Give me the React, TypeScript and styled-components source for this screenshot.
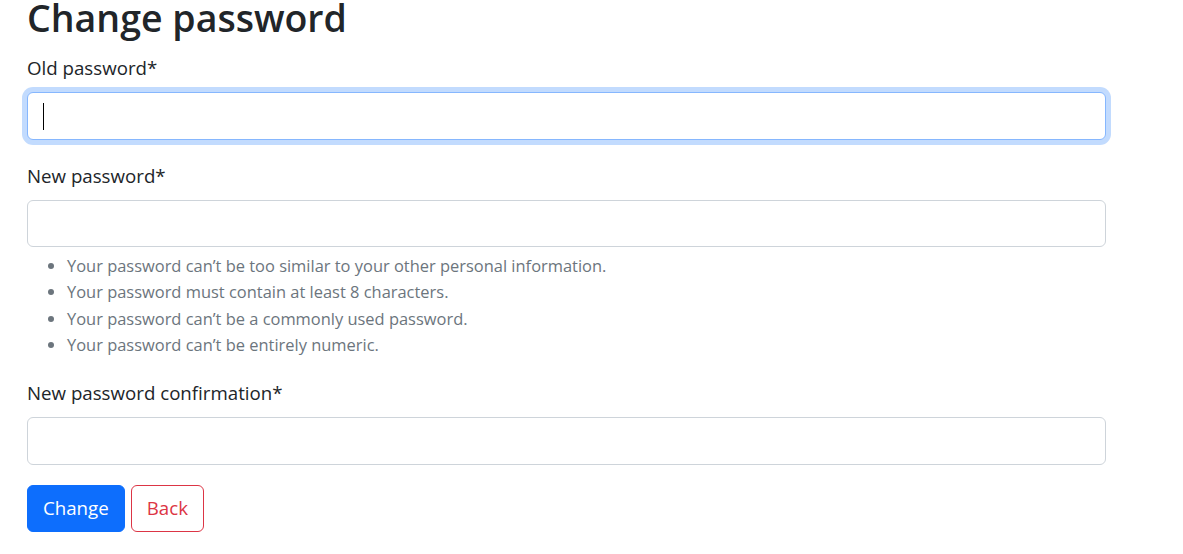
import React from "react";
import styled, { createGlobalStyle } from "styled-components";

const Global = createGlobalStyle`
  html, body { margin: 0; padding: 0; background: #fff; }
  body {
    font-family: "Open Sans", "Noto Sans", sans-serif;
    color: #212529;
    font-size: 18.7px;
    line-height: 30px;
  }
  * { box-sizing: border-box; }
`;

const Page = styled.main`
  width: 1106px;
  padding: 0 0 0 27px;
`;

const Title = styled.h1`
  margin: 0 0 16px;
  font-size: 37.5px;
  line-height: 36px;
  font-weight: 600;
  color: #212529;
`;

const Field = styled.div`
  margin-bottom: 20px;
`;

const Label = styled.label`
  display: block;
  padding-top: 1px;
  margin-bottom: 9px;
  font-size: 18.7px;
  line-height: 30px;
`;

const InputWrap = styled.div`
  position: relative;
`;

const Input = styled.input<{ $focused?: boolean }>`
  display: block;
  width: 100%;
  height: 47.5px;
  padding: 7.5px 15px;
  font: inherit;
  color: #212529;
  background: #fff;
  border: 1.25px solid ${(p) => (p.$focused ? "#86b7fe" : "#ced4da")};
  border-radius: 6px;
  outline: none;
  box-shadow: ${(p) => (p.$focused ? "0 0 0 5px rgba(13,110,253,.25)" : "none")};
`;

const Caret = styled.span`
  position: absolute;
  left: 16px;
  top: 11px;
  width: 1px;
  height: 27px;
  background: #000;
`;

const Help = styled.ul`
  margin: 6px 0 -1px;
  padding-left: 40px;
  font-size: 16.45px;
  line-height: 26.25px;
  color: #6c757d;
`;

const Actions = styled.div`
  display: flex;
  gap: 6px;
`;

const Button = styled.button<{ $variant: "primary" | "danger" }>`
  height: 47.5px;
  padding: 7.5px 15px;
  font: inherit;
  font-size: 18.7px;
  line-height: 30px;
  border-radius: 6px;
  cursor: pointer;
  border: 1.25px solid ${(p) => (p.$variant === "primary" ? "#0d6efd" : "#dc3545")};
  background: ${(p) => (p.$variant === "primary" ? "#0d6efd" : "#fff")};
  color: ${(p) => (p.$variant === "primary" ? "#fff" : "#dc3545")};
`;

export default function App() {
  return (
    <>
      <Global />
      <Page>
        <Title>Change password</Title>
        <Field>
          <Label htmlFor="old">Old password*</Label>
          <InputWrap>
            <Input id="old" type="password" $focused />
            <Caret />
          </InputWrap>
        </Field>
        <Field>
          <Label htmlFor="new1">New password*</Label>
          <Input id="new1" type="password" />
          <Help>
            <li>Your password can’t be too similar to your other personal information.</li>
            <li>Your password must contain at least 8 characters.</li>
            <li>Your password can’t be a commonly used password.</li>
            <li>Your password can’t be entirely numeric.</li>
          </Help>
        </Field>
        <Field>
          <Label htmlFor="new2">New password confirmation*</Label>
          <Input id="new2" type="password" />
        </Field>
        <Actions>
          <Button $variant="primary">Change</Button>
          <Button $variant="danger">Back</Button>
        </Actions>
      </Page>
    </>
  );
}
